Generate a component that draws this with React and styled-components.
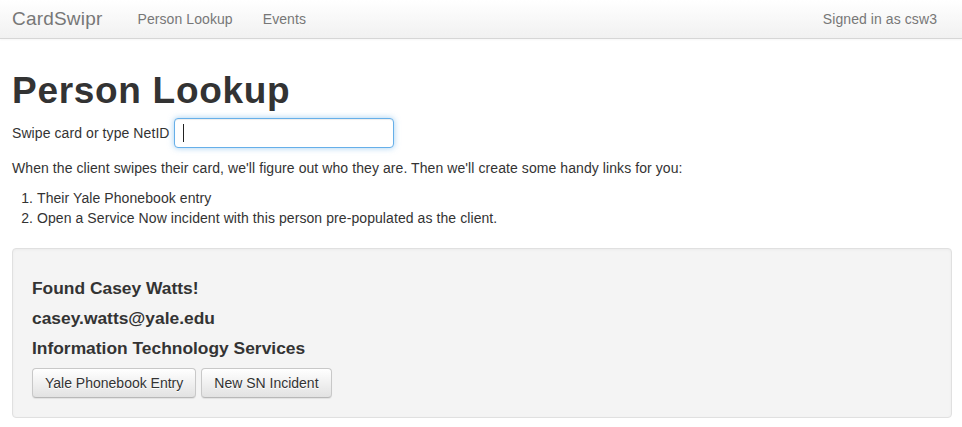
import React from "react";
import styled, { createGlobalStyle } from "styled-components";

const GlobalStyle = createGlobalStyle`
  body {
    margin: 0;
    font-family: "Liberation Sans", Arial, Helvetica, sans-serif;
    font-size: 14px;
    line-height: 20px;
    letter-spacing: 0.08px;
    color: #333;
    background: #fff;
  }
  * { box-sizing: border-box; }
`;

const Navbar = styled.nav`
  display: flex;
  align-items: center;
  height: 39px;
  padding: 0 25px 0 12px;
  background: linear-gradient(to bottom, #ffffff 0%, #f1f1f1 100%);
  border-bottom: 1px solid #d6d6d6;
  box-shadow: 0 1px 2px rgba(0, 0, 0, 0.04);
`;

const Brand = styled.a`
  font-size: 19px;
  color: #777;
  text-decoration: none;
  margin-right: 35px;
  letter-spacing: 0.2px;
`;

const NavLink = styled.a`
  font-size: 14px;
  color: #777;
  text-decoration: none;
  margin-right: 30px;
`;

const NavRight = styled.span`
  margin-left: auto;
  color: #777;
  font-size: 14px;
`;

const Container = styled.main`
  padding: 0 10px 0 12px;
`;

const Title = styled.h1`
  font-size: 37px;
  font-weight: bold;
  line-height: 41px;
  letter-spacing: 0.7px;
  margin: 31px 0 7px;
`;

const FormRow = styled.div`
  display: flex;
  align-items: center;
  gap: 4px;
`;

const Field = styled.span`
  position: relative;
  display: inline-block;

  &::after {
    content: "";
    position: absolute;
    left: 9px;
    top: 6px;
    width: 1px;
    height: 18px;
    background: #222;
  }
`;

const Input = styled.input`
  width: 220px;
  height: 30px;
  padding: 4px 10px;
  font: inherit;
  border: 1px solid #66afe9;
  border-radius: 4px;
  outline: none;
  caret-color: transparent;
  box-shadow: inset 0 1px 1px rgba(0, 0, 0, 0.075), 0 0 6px rgba(102, 175, 233, 0.6);
`;

const Text = styled.p`
  margin: 10px 0 10px;
`;

const List = styled.ol`
  margin: 0 0 20px;
  padding-left: 25px;
`;

const Well = styled.section`
  padding: 19px;
  background: #f4f4f4;
  border: 1px solid #e0e0e0;
  border-radius: 4px;
  box-shadow: inset 0 1px 3px rgba(0, 0, 0, 0.04), 0 1px 0 rgba(255, 255, 255, 0.1);
`;

const Info = styled.h4`
  font-size: 17.4px;
  font-weight: bold;
  line-height: 20px;
  letter-spacing: 0;
  margin: 10px 0;
`;

const Actions = styled.div`
  display: flex;
  gap: 5px;
`;

const Button = styled.button`
  height: 30px;
  padding: 0 12px;
  font: inherit;
  font-size: 14px;
  color: #333;
  background: linear-gradient(to bottom, #ffffff 0%, #e2e2e2 100%);
  border: 1px solid #c8c8c8;
  border-bottom-color: #b8b8b8;
  border-radius: 4px;
  box-shadow: inset 0 1px 0 rgba(255, 255, 255, 0.15), 0 1px 1px rgba(0, 0, 0, 0.075);
  text-shadow: 0 1px 0 #fff;
  cursor: pointer;
`;

export default function App() {
  return (
    <>
      <GlobalStyle />
      <Navbar>
        <Brand href="#">CardSwipr</Brand>
        <NavLink href="#">Person Lookup</NavLink>
        <NavLink href="#">Events</NavLink>
        <NavRight>Signed in as csw3</NavRight>
      </Navbar>
      <Container>
        <Title>Person Lookup</Title>
        <FormRow>
          <label htmlFor="netid">Swipe card or type NetID</label>
          <Field>
            <Input id="netid" type="text" />
          </Field>
        </FormRow>
        <Text>
          When the client swipes their card, we'll figure out who they are. Then we'll create some handy links for you:
        </Text>
        <List>
          <li>Their Yale Phonebook entry</li>
          <li>Open a Service Now incident with this person pre-populated as the client.</li>
        </List>
        <Well>
          <Info>Found Casey Watts!</Info>
          <Info>casey.watts@yale.edu</Info>
          <Info>Information Technology Services</Info>
          <Actions>
            <Button>Yale Phonebook Entry</Button>
            <Button>New SN Incident</Button>
          </Actions>
        </Well>
      </Container>
    </>
  );
}
